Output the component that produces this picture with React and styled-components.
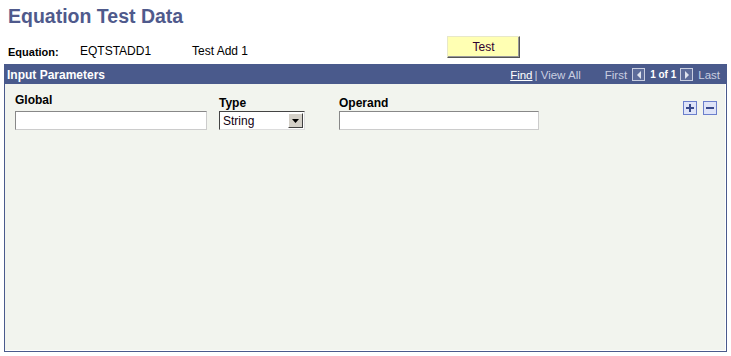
import React from "react";
import styled, { createGlobalStyle } from "styled-components";

const GlobalStyle = createGlobalStyle`
  html, body {
    margin: 0;
    padding: 0;
    background: #ffffff;
    font-family: Arial, "Liberation Sans", sans-serif;
    font-size: 11px;
    color: #000;
  }
`;

const Page = styled.div`
  width: 731px;
  height: 356px;
  padding: 0 4px 0 4px;
  box-sizing: border-box;
  overflow: hidden;
`;

const Title = styled.h1`
  margin: 0;
  padding: 5px 0 0 4px;
  height: 30px;
  box-sizing: border-box;
  font-size: 19.5px;
  font-weight: bold;
  color: #4f5a8c;
`;

const InfoRow = styled.div`
  display: flex;
  align-items: flex-end;
  height: 34px;
  padding: 0 0 6px 4px;
  box-sizing: border-box;
`;

const InfoLabel = styled.span`
  font-weight: bold;
  width: 72px;
  font-size: 11px;
`;

const InfoValue = styled.span`
  width: ${(p) => p.$w}px;
  font-size: 12px;
`;

const TestButton = styled.button`
  margin-left: ${(p) => p.$ml}px;
  align-self: flex-start;
  margin-top: 6px;
  width: 73px;
  height: 22px;
  background: #ffffb3;
  border: 1px solid;
  border-color: #e8e8c8 #555 #555 #e8e8c8;
  box-shadow: inset -1px -1px 0 #999;
  font-family: Arial, "Liberation Sans", sans-serif;
  font-size: 12px;
  color: #300030;
  padding: 0;
`;

const Grid = styled.div`
  border: 1px solid #4a5a8c;
  height: 288px;
  box-sizing: border-box;
  display: flex;
  flex-direction: column;
  background: #f2f4ee;
`;

const GridHeader = styled.div`
  display: flex;
  align-items: center;
  height: 19px;
  background: #4a5a8c;
  padding: 0 6px 0 2px;
  color: #ffffff;
`;

const HeaderTitle = styled.span`
  font-weight: bold;
  font-size: 12px;
  flex: 1;
`;

const NavLink = styled.span`
  color: #ffffff;
  text-decoration: ${(p) => (p.$underline ? "underline" : "none")};
  font-size: 11.5px;
`;

const NavMuted = styled.span`
  color: #c9cee0;
  font-size: 11.5px;
  margin-left: ${(p) => p.$ml || 0}px;
`;

const NavCount = styled.span`
  font-weight: bold;
  font-size: 10px;
  color: #ffffff;
  margin: 0 4px 0 5px;
`;

const ArrowBox = styled.span`
  display: inline-flex;
  width: 13px;
  height: 13px;
  box-sizing: border-box;
  border: 1px solid #c9cee0;
  background: #5d6c9a;
  margin-left: ${(p) => p.$ml || 0}px;
  align-items: center;
  justify-content: center;
`;

const GridBody = styled.div`
  flex: 1;
  display: flex;
  align-items: flex-start;
  padding: 9px 8px 0 10px;
  border-right: 1px solid #ffffff;
  border-bottom: 1px solid #ffffff;
`;

const Field = styled.div`
  display: flex;
  flex-direction: column;
  margin-left: ${(p) => p.$ml || 0}px;
`;

const FieldLabel = styled.label`
  font-weight: bold;
  font-size: 12px;
  height: 17px;
  display: flex;
  align-items: ${(p) => (p.$top ? "flex-start" : "flex-end")};
  padding-bottom: 1px;
`;

const TextInput = styled.div`
  width: ${(p) => p.$w}px;
  height: 19px;
  box-sizing: border-box;
  background: #ffffff;
  border: 1px solid;
  border-color: #888 #ccc #ccc #888;
`;

const Select = styled.div`
  width: 86px;
  height: 19px;
  box-sizing: border-box;
  background: #ffffff;
  border: 1px solid;
  border-color: #444 #ddd #ddd #444;
  display: flex;
  align-items: center;
  font-size: 12px;
  padding-left: 3px;
  color: #100010;
`;

const SelectText = styled.span`
  flex: 1;
`;

const SelectArrow = styled.span`
  width: 15px;
  height: 15px;
  margin-right: 1px;
  box-sizing: border-box;
  background: #d4d0c8;
  border: 1px solid;
  border-color: #fff #404040 #404040 #fff;
  display: flex;
  align-items: center;
  justify-content: center;
`;

const RowButtons = styled.div`
  margin-left: auto;
  margin-top: 8px;
  display: flex;
  gap: 6px;
`;

const RowButton = styled.span`
  width: 14px;
  height: 14px;
  box-sizing: border-box;
  border: 1px solid #6b7fcc;
  background: #dfe4f8;
  display: flex;
  align-items: center;
  justify-content: center;
`;

const App = () => (
  <>
    <GlobalStyle />
    <Page>
      <Title>Equation Test Data</Title>
      <InfoRow>
        <InfoLabel>Equation:</InfoLabel>
        <InfoValue $w={112}>EQTSTADD1</InfoValue>
        <InfoValue $w={80}>Test Add 1</InfoValue>
        <TestButton $ml={175}>Test</TestButton>
      </InfoRow>
      <Grid>
        <GridHeader>
          <HeaderTitle>Input Parameters</HeaderTitle>
          <NavLink $underline>Find</NavLink>
          <NavMuted $ml={2}>| View All</NavMuted>
          <NavMuted $ml={24}>First</NavMuted>
          <ArrowBox $ml={5}>
            <svg width="6" height="8" viewBox="0 0 6 8">
              <path d="M5 0 L1 4 L5 8 Z" fill="#dfe3ee" />
            </svg>
          </ArrowBox>
          <NavCount>1 of 1</NavCount>
          <ArrowBox>
            <svg width="6" height="8" viewBox="0 0 6 8">
              <path d="M1 0 L5 4 L1 8 Z" fill="#dfe3ee" />
            </svg>
          </ArrowBox>
          <NavMuted $ml={5}>Last</NavMuted>
        </GridHeader>
        <GridBody>
          <Field>
            <FieldLabel $top>Global</FieldLabel>
            <TextInput $w={192} />
          </Field>
          <Field $ml={12}>
            <FieldLabel>Type</FieldLabel>
            <Select>
              <SelectText>String</SelectText>
              <SelectArrow>
                <svg width="7" height="4" viewBox="0 0 7 4">
                  <path d="M0 0 H7 L3.5 4 Z" fill="#000" />
                </svg>
              </SelectArrow>
            </Select>
          </Field>
          <Field $ml={34}>
            <FieldLabel>Operand</FieldLabel>
            <TextInput $w={200} />
          </Field>
          <RowButtons>
            <RowButton>
              <svg width="10" height="10" viewBox="0 0 10 10">
                <path d="M4 1 H6 V4 H9 V6 H6 V9 H4 V6 H1 V4 H4 Z" fill="#3a4a8c" />
              </svg>
            </RowButton>
            <RowButton>
              <svg width="10" height="10" viewBox="0 0 10 10">
                <path d="M1 4 H9 V6 H1 Z" fill="#3a4a8c" />
              </svg>
            </RowButton>
          </RowButtons>
        </GridBody>
      </Grid>
    </Page>
  </>
);

export default App;
